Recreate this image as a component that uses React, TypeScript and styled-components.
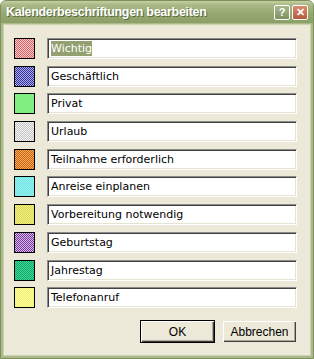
import React from "react";
import styled, { createGlobalStyle } from "styled-components";

const Global = createGlobalStyle`
  html, body { margin: 0; padding: 0; background: #ffffff; }
  * { box-sizing: border-box; }
`;

const Window = styled.div`
  width: 314px;
  height: 359px;
  display: flex;
  flex-direction: column;
  background: #a9b98a;
  border: 1px solid #7f905a;
  border-radius: 6px 6px 0 0;
  overflow: hidden;
  font-family: "DejaVu Sans", Tahoma, sans-serif;
`;

const TitleBar = styled.div`
  height: 22px;
  flex: none;
  display: flex;
  align-items: center;
  padding: 0 5px 0 5px;
  background: linear-gradient(#c4cfa3 0%, #a9b986 18%, #97a972 55%, #8c9f66 100%);
`;

const Title = styled.div`
  flex: 1;
  color: #ffffff;
  font-family: "Liberation Sans", Arial, sans-serif;
  font-weight: bold;
  font-size: 12.5px;
  letter-spacing: -0.3px;
  text-shadow: 1px 1px 0 #5a6a3a;
  white-space: nowrap;
`;

const CapButton = styled.div<{ $close?: boolean }>`
  width: 16px;
  height: 15px;
  margin-left: 2px;
  border-radius: 2px;
  border: 1px solid #ffffff;
  display: flex;
  align-items: center;
  justify-content: center;
  color: #ffffff;
  font-family: "Liberation Sans", Arial, sans-serif;
  font-weight: bold;
  font-size: 11px;
  background: ${(p) =>
    p.$close
      ? "linear-gradient(#d98b6e, #b75a3c)"
      : "linear-gradient(#a7b88a, #7e9160)"};
`;

const Client = styled.div`
  flex: 1;
  margin: 2px 3px 3px 3px;
  background: #ece9d8;
  box-shadow: 0 0 0 1px #c9d4b0;
  padding: 13px 13px 0 10px;
  display: flex;
  flex-direction: column;
`;

const List = styled.div`
  display: flex;
  flex-direction: column;
  gap: 6.7px;
`;

const Row = styled.div`
  display: flex;
  align-items: center;
  gap: 12px;
  height: 21px;
`;

const Swatch = styled.div`
  width: 21px;
  height: 21px;
  flex: none;
  border: 1px solid #000000;
  display: flex;
`;

const Field = styled.div`
  flex: 1;
  height: 21px;
  background: #ffffff;
  border-top: 1px solid #8c8c8c;
  border-left: 1px solid #8c8c8c;
  border-right: 1px solid #ffffff;
  border-bottom: 1px solid #ffffff;
  box-shadow: inset 1px 1px 0 #404040, inset -1px -1px 0 #e6e3d4;
  padding: 0 0 0 3px;
  display: flex;
  align-items: center;
  font-size: 11px;
  color: #000000;
`;

const Selected = styled.span`
  background: #93a070;
  color: #ffffff;
  padding: 1px 0;
`;

const Buttons = styled.div`
  display: flex;
  justify-content: flex-end;
  gap: 7px;
  margin-top: 12px;
`;

const Button = styled.div<{ $default?: boolean }>`
  width: 75px;
  height: 23px;
  display: flex;
  align-items: center;
  justify-content: center;
  font-family: "Liberation Sans", Tahoma, sans-serif;
  font-size: 12px;
  color: #000000;
  background: #ece9d8;
  border: 1px solid ${(p) => (p.$default ? "#000000" : "#ece9d8")};
  box-shadow: inset 1px 1px 0 #ffffff, inset -1px -1px 0 #404040,
    inset -2px -2px 0 #aca899;
`;

const labels: { text: string; a: string; b: string }[] = [
  { text: "Wichtig", a: "#d86060", b: "#f8d0d0" },
  { text: "Geschäftlich", a: "#303098", b: "#b0b0f0" },
  { text: "Privat", a: "#78ec78", b: "#88f088" },
  { text: "Urlaub", a: "#c4c4c4", b: "#f4f4f4" },
  { text: "Teilnahme erforderlich", a: "#c86010", b: "#f8b060" },
  { text: "Anreise einplanen", a: "#78e4e4", b: "#90f0f0" },
  { text: "Vorbereitung notwendig", a: "#d8d848", b: "#f0f090" },
  { text: "Geburtstag", a: "#783898", b: "#d8b8f0" },
  { text: "Jahrestag", a: "#10a868", b: "#40d898" },
  { text: "Telefonanruf", a: "#f0f070", b: "#fcfca0" },
];

function Dither({ id, a, b }: { id: string; a: string; b: string }) {
  return (
    <svg width="19" height="19" shapeRendering="crispEdges">
      <defs>
        <pattern id={id} width="2" height="2" patternUnits="userSpaceOnUse">
          <rect width="2" height="2" fill={b} />
          <rect width="1" height="1" fill={a} />
          <rect x="1" y="1" width="1" height="1" fill={a} />
        </pattern>
      </defs>
      <rect width="19" height="19" fill={`url(#${id})`} />
    </svg>
  );
}

export default function App() {
  return (
    <>
      <Global />
      <Window>
        <TitleBar>
          <Title>Kalenderbeschriftungen bearbeiten</Title>
          <CapButton>?</CapButton>
          <CapButton $close>✕</CapButton>
        </TitleBar>
        <Client>
          <List>
            {labels.map((l, i) => (
              <Row key={l.text}>
                <Swatch>
                  <Dither id={`d${i}`} a={l.a} b={l.b} />
                </Swatch>
                <Field>{i === 0 ? <Selected>{l.text}</Selected> : l.text}</Field>
              </Row>
            ))}
          </List>
          <Buttons>
            <Button $default>OK</Button>
            <Button>Abbrechen</Button>
          </Buttons>
        </Client>
      </Window>
    </>
  );
}
